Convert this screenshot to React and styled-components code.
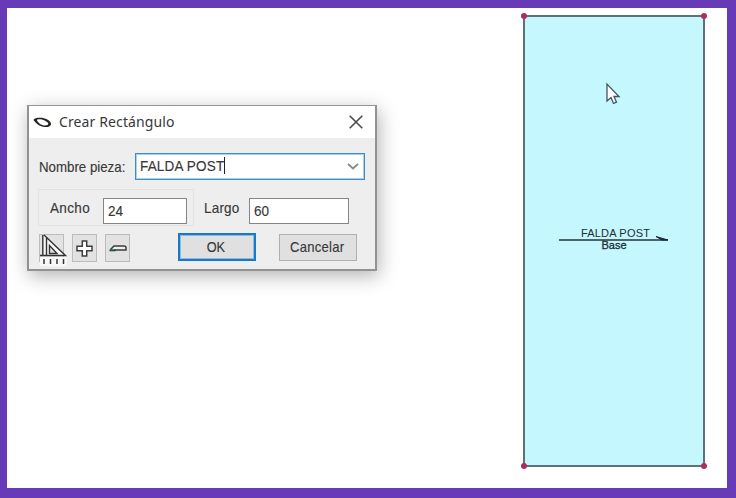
import React from 'react';
import styled, { createGlobalStyle } from 'styled-components';

const GlobalStyle = createGlobalStyle`
  * { box-sizing: border-box; }
  body { margin: 0; overflow: hidden; }
`;

const Frame = styled.div`
  width: 736px;
  height: 498px;
  border: solid #673ab7;
  border-width: 8px 9px 10px 7px;
  background: #fff;
  font-family: "Liberation Sans", Arial, sans-serif;
  color: #383838;
`;

const Canvas = styled.main`
  position: relative;
  width: 100%;
  height: 100%;
  overflow: hidden;
`;

const Dialog = styled.section`
  position: absolute;
  left: 20px;
  top: 97px;
  width: 350px;
  height: 166px;
  display: flex;
  flex-direction: column;
  border: solid #929292;
  border-width: 1px 2px 2px;
  background: #eeeeee;
  box-shadow: 2px 5px 18px rgba(0, 0, 0, 0.3);
`;

const TitleBar = styled.header`
  height: 32px;
  flex: none;
  display: flex;
  align-items: center;
  background: #fff;
  padding: 0 12px 0 4px;
`;

const Title = styled.h1`
  flex: 1;
  margin: -1px 0 0 7px;
  font: 400 14px "Noto Sans", sans-serif;
  letter-spacing: 0.12px;
`;

const Glyph = styled.svg`
  display: block;
  flex: none;
  overflow: visible;
`;

const NameRow = styled.div`
  display: flex;
  align-items: center;
  height: 27px;
  margin: 15px 10px 0 10px;
`;

const Label = styled.label`
  width: ${p => p.$width}px;
  flex: none;
  white-space: nowrap;
`;

const Narrow = styled.span`
  display: inline-block;
  font-size: 15px;
  line-height: 17px;
  white-space: nowrap;
  letter-spacing: ${p => p.$spacing || 0}px;
  transform: scaleX(${p => p.$scale});
  transform-origin: ${p => p.$origin || 'left'};
  -webkit-text-stroke: 0.15px currentColor;
`;

const Combo = styled.div`
  flex: 1;
  height: 27px;
  display: flex;
  align-items: center;
  justify-content: space-between;
  padding: 0 5px 0 4px;
  border: 1px solid #3d8cc4;
  box-shadow: inset 0 0 0 1px #a9d1ea;
  background: #fff;
`;

const Entry = styled.div`
  width: 85px;
  height: 17px;
  margin-top: -2px;
  border-right: 1px solid #222;
`;

const SizeRow = styled.div`
  display: flex;
  align-items: flex-start;
  height: 37px;
  margin: 9px 0 0 9px;
`;

const SizeGroup = styled.div`
  display: flex;
  align-items: flex-start;
  width: ${p => p.$width}px;
  height: 37px;
  padding: 8px 0 0 ${p => p.$indent}px;
  border: 1px solid ${p => (p.$framed ? '#e2e2e2' : 'transparent')};
`;

const SizeLabel = styled(Label)`
  padding-top: 1px;
`;

const NumberBox = styled.div`
  width: ${p => p.$width}px;
  height: 26px;
  display: flex;
  align-items: center;
  padding: 0 0 2px 4px;
  border: 1px solid #858585;
  background: #fff;
`;

const Actions = styled.footer`
  display: flex;
  align-items: flex-start;
  margin-top: 7px;
  padding-left: 10px;
`;

const ToolButton = styled.button`
  width: 25px;
  height: 28px;
  margin: 1px ${p => (p.$last ? 0 : 8)}px 0 0;
  padding: 0;
  display: grid;
  place-items: center;
  border: 1px solid #bcbcbc;
  background: #e2e2e2;
`;

const PushButton = styled.button`
  width: 78px;
  height: ${p => (p.$primary ? 28 : 27)}px;
  margin: ${p => (p.$primary ? '0 23px 0 48px' : '1px 0 0')};
  padding: 0 2px 2px 0;
  border: ${p => (p.$primary ? '2px solid #1a78c8' : '1px solid #b0b0b0')};
  box-shadow: ${p => (p.$primary ? 'inset 0 0 0 1px #8dbbe0' : 'none')};
  background: #e0e0e0;
  color: inherit;
  font-family: "Liberation Sans", Arial, sans-serif;
`;

const Piece = styled.div`
  position: absolute;
  left: 516px;
  top: 7px;
  width: 182px;
  height: 452px;
  border: 2px solid #5d7178;
  background: #c5f7fe;
`;

const Corner = styled.i`
  position: absolute;
  left: ${p => p.$x}px;
  top: ${p => p.$y}px;
  width: 6px;
  height: 6px;
  border-radius: 50%;
  background: #b02a62;
`;

const Grain = styled.div`
  position: absolute;
  left: 552px;
  top: 219px;
  width: 110px;
  display: flex;
  flex-direction: column;
  align-items: center;
  font-size: 11px;
  line-height: 12px;
  color: #222f35;
`;

const PieceName = styled.span`
  height: 12px;
  margin-left: 3px;
  white-space: nowrap;
  letter-spacing: 0.2px;
`;

const Fold = styled.span`
  margin-top: -2px;
  -webkit-text-stroke: 0.3px currentColor;
`;

const Pointer = styled(Glyph)`
  position: absolute;
  left: 599px;
  top: 75px;
`;

const corners = [[514, 5], [694, 5], [514, 455], [694, 455]];

export default function App() {
  return (
    <>
      <GlobalStyle />
      <Frame>
        <Canvas>
          <Dialog>
            <TitleBar>
              <Glyph width="19" height="11" viewBox="0 0 19 11">
                <path fillRule="evenodd" fill="#252525" d="M.5 3C1 .8 7 .5 11 1.200C15 2 18.500 5 18 7.500C17 10.200 13 10.500 9 9.500C5 8.500 3 6 .5 3ZM3.800 3C5 5.500 7 7.500 10 8.300C13 8.900 15.600 8.200 15.300 6.600C14.500 4.800 12 3.400 9 2.600C7 2.200 4.500 2.200 3.800 3Z" />
              </Glyph>
              <Title>Crear Rectángulo</Title>
              <Glyph width="14" height="14" viewBox="0 0 14 14" stroke="#4b4b4b" strokeWidth="1.600">
                <path d="M.7.7l12.600 12.600M13.300.7L.7 13.300" />
              </Glyph>
            </TitleBar>
            <NameRow>
              <Label $width={96}><Narrow $scale={0.885}>Nombre pieza:</Narrow></Label>
              <Combo>
                <Entry><Narrow $scale={0.9} $spacing={0.2}>FALDA POST</Narrow></Entry>
                <Glyph width="12" height="7" viewBox="0 0 12 7" fill="none" stroke="#888" strokeWidth="1.700">
                  <path d="M1 1l5 4.500L11 1" />
                </Glyph>
              </Combo>
            </NameRow>
            <SizeRow>
              <SizeGroup $width={156} $indent={11} $framed>
                <SizeLabel $width={53}><Narrow $scale={0.9} $spacing={0.4}>Ancho</Narrow></SizeLabel>
                <NumberBox $width={84}><Narrow $scale={0.9}>24</Narrow></NumberBox>
              </SizeGroup>
              <SizeGroup $width={160} $indent={9}>
                <SizeLabel $width={45}><Narrow $scale={0.9} $spacing={0.2}>Largo</Narrow></SizeLabel>
                <NumberBox $width={100}><Narrow $scale={0.9}>60</Narrow></NumberBox>
              </SizeGroup>
            </SizeRow>
            <Actions>
              <ToolButton aria-label="Escuadra">
                <Glyph width="27" height="31" viewBox="0 0 27 31">
                  <path d="M0 22h27v9H0z" fill="#f8f8f8" />
                  <path d="M3.500 0L25 21H3.500z" fill="#f8f8f8" />
                  <path d="M2.800 0v21M6.500 3v18M4 0l21.500 20.500H0" fill="none" stroke="#333" strokeWidth="1.400" />
                  <path d="M9.500 10.500v8h7.500z" fill="#e2e2e2" stroke="#333" strokeWidth="1.400" />
                  <path d="M4 24v5M10.500 24v5M17 24v5M23.500 24v5" stroke="#333" strokeWidth="1.500" />
                </Glyph>
              </ToolButton>
              <ToolButton aria-label="Agregar">
                <Glyph width="17" height="17" viewBox="0 0 17 17">
                  <path d="M6.300 1h4.400v5.300H16v4.400h-5.300V16H6.300v-5.300H1V6.300h5.300z" fill="#fff" stroke="#3c3c3c" strokeWidth="1.500" />
                </Glyph>
              </ToolButton>
              <ToolButton $last aria-label="Quitar">
                <Glyph width="18" height="8" viewBox="0 0 18 8">
                  <path d="M1.500 5.500L5 2H15q2 0 2 1.800v2.200H5" fill="#eee" stroke="#3c3c3c" strokeWidth="1.500" />
                  <path d="M.5 6.300h6" stroke="#1c594a" strokeWidth="2" />
                </Glyph>
              </ToolButton>
              <PushButton $primary><Narrow $scale={0.85} $origin="center">OK</Narrow></PushButton>
              <PushButton><Narrow $scale={0.87} $spacing={0.3} $origin="center">Cancelar</Narrow></PushButton>
            </Actions>
          </Dialog>
          <Piece />
          {corners.map(([x, y]) => <Corner key={`${x}-${y}`} $x={x} $y={y} />)}
          <Grain>
            <PieceName>FALDA POST</PieceName>
            <Glyph width="110" height="2" viewBox="0 0 110 2">
              <path d="M0 1h109" stroke="#263238" strokeWidth="1.300" />
              <path d="M97-2.500L109 1h-6z" fill="#202838" stroke="#202838" />
            </Glyph>
            <Fold>Base</Fold>
          </Grain>
          <Pointer width="14" height="22" viewBox="0 0 14 22">
            <path d="M1 1v17l4-3.500 2.500 6 3-1.300-2.500-5.700H13z" fill="#fff" stroke="#44545c" strokeWidth="1.300" />
          </Pointer>
        </Canvas>
      </Frame>
    </>
  );
}
